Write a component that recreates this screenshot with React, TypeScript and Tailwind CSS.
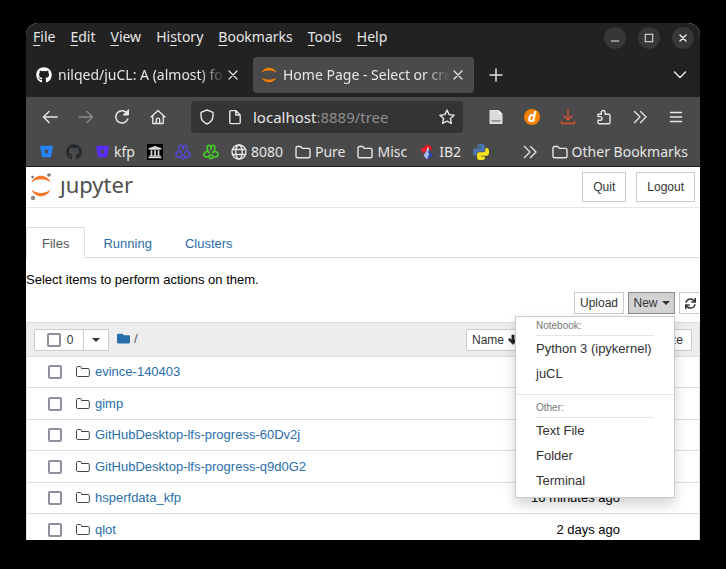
import type { ReactNode } from "react";
import { FaBitbucket, FaFolder, FaGithub, FaSync, FaUniversity } from "react-icons/fa";

const menus: [string, string, string][] = [
  ["", "F", "ile"],
  ["", "E", "dit"],
  ["", "V", "iew"],
  ["Hi", "s", "tory"],
  ["", "B", "ookmarks"],
  ["", "T", "ools"],
  ["", "H", "elp"],
];

const files = [
  { name: "evince-140403", modified: "" },
  { name: "gimp", modified: "" },
  { name: "GitHubDesktop-lfs-progress-60Dv2j", modified: "" },
  { name: "GitHubDesktop-lfs-progress-q9d0G2", modified: "" },
  { name: "hsperfdata_kfp", modified: "16 minutes ago" },
  { name: "qlot", modified: "2 days ago" },
];

function Line({ children, size = 16, width = 1.4, className = "" }: { children: ReactNode; size?: number; width?: number; className?: string }) {
  return (
    <svg
      width={size}
      height={size}
      viewBox="0 0 16 16"
      fill="none"
      stroke="currentColor"
      strokeWidth={width}
      strokeLinecap="round"
      strokeLinejoin="round"
      className={`shrink-0 ${className}`}
      aria-hidden="true"
    >
      {children}
    </svg>
  );
}

const CloseIcon = () => (
  <Line width={1.2}>
    <path d="M4 4l8 8M12 4l-8 8" />
  </Line>
);

const BookmarkFolder = () => (
  <Line>
    <path d="M1 4a1.5 1.5 0 0 1 1.5-1.5h3.2L7.6 4.4h5.9A1.5 1.5 0 0 1 15 5.9v6.3a1.5 1.5 0 0 1-1.5 1.5h-11A1.5 1.5 0 0 1 1 12.2z" />
  </Line>
);

const ListFolder = () => (
  <svg width="14" height="12" viewBox="0 0 14 12" fill="none" stroke="#444" strokeWidth="1" className="shrink-0" aria-hidden="true">
    <path d="M.5 1.7A1.2 1.2 0 0 1 1.700.5h2.600A1.200 1.200 0 0 1 5.500 1.700v.8h6.600A1.200 1.200 0 0 1 13.300 3.700v5.600A1.200 1.200 0 0 1 12.100 10.500H1.700A1.200 1.200 0 0 1 .5 9.300z" />
  </svg>
);

const ArrowDown = () => (
  <svg width="10" height="12" viewBox="0 0 10 12" className="-mr-1 shrink-0" aria-hidden="true">
    <path d="M3.900 1v5.300L1.800 4.200.3 5.700 5 10.500l4.700-4.800-1.500-1.500-2.100 2.100V1z" fill="#222" stroke="#222" strokeWidth=".6" />
  </svg>
);

const Clover = ({ color }: { color: string }) => (
  <svg width="16" height="16" viewBox="0 0 16 16" fill="none" stroke={color} strokeWidth="1.700" strokeLinejoin="round" strokeLinecap="round" className="shrink-0" aria-hidden="true">
    <path d="M8 5.500V3.500C7.500.5 3.800.8 4.200 3.800l.6 3.500C1.800 7.500.2 9.500 1.300 11.800c1.200 2 3.600 1.700 5 .2C5.500 15.500 10.500 15.500 9.700 12c1.400 1.500 3.800 1.800 5-.2 1.100-2.300-.5-4.300-3.500-4.500l.6-3.500C12.200.8 8.500.5 8 3.500" />
    <path d="M4.800 7.300l1.500 1.200M11.200 7.300L9.700 8.500M6.300 12l.9-1M9.700 12l-.9-1" />
  </svg>
);

const Python = () => (
  <svg width="16" height="16" viewBox="0 0 24 24" className="shrink-0" aria-hidden="true">
    <path
      fill="#4b74b0"
      d="M14.25.18l.9.2.73.26.59.3.45.32.34.34.25.34.16.33.1.3.04.26.02.2-.01.13V8.5l-.05.63-.13.55-.21.46-.26.38-.3.31-.33.25-.35.19-.35.14-.33.1-.3.07-.26.04-.21.02H8.77l-.69.05-.59.14-.5.22-.41.27-.33.32-.27.35-.2.36-.15.37-.1.35-.07.32-.04.27-.02.21v3.06H3.17l-.21-.03-.28-.07-.32-.12-.35-.18-.36-.26-.36-.36-.35-.46-.32-.59-.28-.73-.21-.88-.14-1.05-.05-1.23.06-1.22.16-1.04.24-.87.32-.71.36-.57.4-.44.42-.33.42-.24.4-.16.36-.1.32-.05.24-.01h.16l.06.01h8.16v-.83H6.18l-.01-2.75-.02-.37.05-.34.11-.31.17-.28.25-.26.31-.23.38-.2.44-.18.51-.15.58-.12.64-.1.71-.06.77-.04.84-.02 1.27.05zm-6.3 1.98l-.23.33-.08.41.08.41.23.34.33.22.41.09.41-.09.33-.22.23-.34.08-.41-.08-.41-.23-.33-.33-.22-.41-.09-.41.09z"
    />
    <path
      fill="#f5e01c"
      d="M21.04 6.11l.28.06.32.12.35.18.36.27.36.35.35.47.32.59.28.73.21.88.14 1.04.05 1.23-.06 1.23-.16 1.04-.24.86-.32.71-.36.57-.4.45-.42.33-.42.24-.4.16-.36.09-.32.05-.24.02-.16-.01h-8.22v.82h5.84l.01 2.76.02.36-.05.34-.11.31-.17.29-.25.25-.31.24-.38.2-.44.17-.51.15-.58.13-.64.09-.71.07-.77.04-.84.01-1.27-.04-1.07-.14-.9-.2-.73-.25-.59-.3-.45-.33-.34-.34-.25-.34-.16-.33-.1-.3-.04-.25-.02-.2.01-.13v-5.34l.05-.64.13-.54.21-.46.26-.38.3-.32.33-.24.35-.2.35-.14.33-.1.3-.06.26-.04.21-.02.13-.01h5.84l.69-.05.59-.14.5-.21.41-.28.33-.32.27-.35.2-.36.15-.36.1-.35.07-.32.04-.28.02-.21V6.07h2.09l.14.01z"
    />
  </svg>
);

function Caret() {
  return <span className="inline-block border-x-4 border-t-4 border-x-transparent border-t-current" />;
}

function Check({ label }: { label: string }) {
  return (
    <input
      type="checkbox"
      aria-label={label}
      className="size-3.5 shrink-0 appearance-none rounded-xs border-2 border-[#8f8f9d] bg-white checked:bg-[#8f8f9d]"
    />
  );
}

function NavButton({ label, children }: { label: string; children: ReactNode }) {
  return (
    <button type="button" aria-label={label} className="flex w-9 shrink-0 items-center justify-center">
      {children}
    </button>
  );
}

function Bookmark({ label, text, children }: { label: string; text?: string; children: ReactNode }) {
  return (
    <a href="#" aria-label={label} className="flex shrink-0 items-center gap-1 whitespace-nowrap">
      <span className="flex size-4 items-center justify-center">{children}</span>
      {text && <span>{text}</span>}
    </a>
  );
}

function BrowserTab({ icon, title, active = false }: { icon: ReactNode; title: string; active?: boolean }) {
  return (
    <div className={`flex h-9 w-[221px] items-center rounded-sm pr-2 pl-2 ${active ? "bg-[#4a4a4a]" : ""}`}>
      {icon}
      <button
        type="button"
        className="ml-1.5 min-w-0 flex-1 overflow-hidden text-left whitespace-nowrap [mask-image:linear-gradient(to_right,black_85%,transparent)]"
      >
        {title}
      </button>
      <button type="button" aria-label="Close tab">
        <CloseIcon />
      </button>
    </div>
  );
}

function WindowButton({ label, children }: { label: string; children: ReactNode }) {
  return (
    <button type="button" aria-label={label} className="flex size-[22px] items-center justify-center rounded-full bg-[#373737]">
      {children}
    </button>
  );
}

function BrowserChrome() {
  return (
    <header className="shrink-0 bg-[#222] font-['Noto_Sans',sans-serif] text-sm leading-5 text-[#e6e6e6]">
      <div className="flex h-[30px] items-center pr-1.5 pl-[7px]">
        <nav className="flex flex-1 gap-[15px] pb-0.5">
          {menus.map(([before, key, after]) => (
            <button type="button" key={before + key + after}>
              {before}
              <span className="underline underline-offset-3">{key}</span>
              {after}
            </button>
          ))}
        </nav>
        <div className="flex gap-3">
          <WindowButton label="Minimize">
            <Line size={12}>
              <path d="M3 12h10" />
            </Line>
          </WindowButton>
          <WindowButton label="Maximize">
            <Line size={12}>
              <path d="M3 3h10v10H3z" />
            </Line>
          </WindowButton>
          <WindowButton label="Close">
            <Line size={12} width={2}>
              <path d="M4 4l8 8M12 4l-8 8" />
            </Line>
          </WindowButton>
        </div>
      </div>

      <div className="flex h-11 items-center pr-3 pl-0.5">
        <BrowserTab icon={<FaGithub size={16} className="shrink-0 text-white" />} title="nilqed/juCL: A (almost) fo" />
        <div className="ml-1">
          <BrowserTab
            active
            title="Home Page - Select or cre"
            icon={
              <svg width="16" height="16" viewBox="0 0 16 16" fill="#f57c00" className="shrink-0" aria-hidden="true">
                <path d="M.5 5.500C3-.8 13-.8 15.500 5.500 12 2.800 4 2.800.5 5.500zM.5 10.500C4 13.200 12 13.200 15.500 10.500 13 16.800 3 16.800.5 10.500z" />
              </svg>
            }
          />
        </div>
        <button type="button" aria-label="New tab" className="ml-3.5">
          <Line width={1.5}>
            <path d="M8 2v12M2 8h12" />
          </Line>
        </button>
        <button type="button" aria-label="List all tabs" className="ml-auto">
          <Line width={1.5}>
            <path d="M2.500 5L8 10.500 13.500 5" />
          </Line>
        </button>
      </div>

      <div className="flex h-10 items-center bg-[#4a4a4a] px-1.5">
        <NavButton label="Back">
          <Line width={1.5}>
            <path d="M15 8H1.500M7 2.500L1.500 8 7 13.500" />
          </Line>
        </NavButton>
        <NavButton label="Forward">
          <Line width={1.5} className="text-[#8a8a8a]">
            <path d="M1 8h13.500M9 2.500L14.500 8 9 13.500" />
          </Line>
        </NavButton>
        <NavButton label="Reload">
          <Line width={1.5}>
            <path d="M13.800 10A6.200 6.200 0 1 1 13 4.200" />
            <path d="M14.500 1v5h-5z" fill="currentColor" strokeWidth="1" />
          </Line>
        </NavButton>
        <NavButton label="Home">
          <Line>
            <path d="M1 8l7-6.500L15 8M2.800 6.800v7.700h10.400V6.800M6.300 14.500v-3.700a1.700 1.700 0 0 1 3.400 0v3.700" />
          </Line>
        </NavButton>
        <div className="ml-[15px] flex h-8 min-w-0 flex-1 items-center rounded-sm bg-[#343434] px-2">
          <Line>
            <path d="M8 1l6 2.400v3.400c0 3.600-2.500 6.800-6 8.200-3.500-1.400-6-4.600-6-8.200V3.400z" />
          </Line>
          <Line className="ml-3">
            <path d="M2.800 2.600A1 1 0 0 1 3.800 1.600h5l4.400 4.400v7.600a1 1 0 0 1-1 1H3.800a1 1 0 0 1-1-1zM8.800 1.600V6h4.400" />
          </Line>
          <button type="button" className="ml-2.5 flex-1 text-left text-[15px] text-[#e6e6e6]">
            localhost<span className="text-[#8f8f8f]">:8889/tree</span>
          </button>
          <button type="button" aria-label="Bookmark this page">
            <Line>
              <path d="M8 1l2.100 4.600 5 .6-3.700 3.400 1 4.900L8 12.100l-4.400 2.400 1-4.900L.9 6.200l5-.6z" />
            </Line>
          </button>
        </div>
        <div className="ml-[15px] flex">
          <NavButton label="Reader">
            <svg width="16" height="16" viewBox="0 0 16 16" aria-hidden="true">
              <path d="M1.500 1h9l4 4v10h-13z" fill="#dcdcdc" />
              <path d="M10.500 1v4h4z" fill="#f8f8f8" />
              <path d="M3.500 11h9v2h-9z" fill="#9a9a9a" />
            </svg>
          </NavButton>
          <NavButton label="Document extension">
            <span className="flex size-4 items-center justify-center rounded-full bg-[#f58300] text-sm leading-4 font-bold text-white italic">
              d
            </span>
          </NavButton>
          <NavButton label="Downloads">
            <Line className="text-[#d9532c]">
              <path d="M8 1v10M4 7l4 4 4-4M1.500 12.500v2h13v-2" />
            </Line>
          </NavButton>
          <NavButton label="Extensions">
            <Line>
              <path d="M2 5.200h3.300V3.400a1.900 1.900 0 0 1 3.800 0v1.800h3.700a1.200 1.200 0 0 1 1.200 1.200v7.100a1.200 1.200 0 0 1-1.200 1.200H3.200A1.200 1.200 0 0 1 2 13.500v-2.300h2.200a1.800 1.800 0 0 0 0-3.600H2z" />
            </Line>
          </NavButton>
          <NavButton label="More tools">
            <Line>
              <path d="M2.500 2.500L8 8l-5.500 5.500M8.500 2.500L14 8l-5.500 5.500" />
            </Line>
          </NavButton>
          <NavButton label="Open application menu">
            <Line width={1.5}>
              <path d="M2.500 3.500h11M2.500 8h11M2.500 12.500h11" />
            </Line>
          </NavButton>
        </div>
      </div>

      <div className="flex h-[30px] items-center border-b border-[#1c1c1c] bg-[#4a4a4a] pr-3 pl-3">
        <div className="flex flex-1 items-center gap-3">
          <Bookmark label="Bitbucket">
            <FaBitbucket size={13} color="#2684ff" />
          </Bookmark>
          <Bookmark label="GitHub">
            <FaGithub size={16} color="#24292e" />
          </Bookmark>
          <Bookmark label="kfp" text="kfp">
            <FaBitbucket size={13} color="#5a2dff" />
          </Bookmark>
          <Bookmark label="Archive">
            <span className="flex size-4 items-center justify-center bg-black text-[#d8d8d8]">
              <FaUniversity size={14} />
            </span>
          </Bookmark>
          <Bookmark label="Clover">
            <Clover color="#5448cf" />
          </Bookmark>
          <Bookmark label="Clover green">
            <Clover color="#41cb25" />
          </Bookmark>
          <Bookmark label="8080" text="8080">
            <Line>
              <circle cx="8" cy="8" r="7" />
              <ellipse cx="8" cy="8" rx="3.200" ry="7" />
              <path d="M1.500 5.500h13M1.500 10.500h13" />
            </Line>
          </Bookmark>
          <Bookmark label="Pure" text="Pure">
            <BookmarkFolder />
          </Bookmark>
          <Bookmark label="Misc" text="Misc">
            <BookmarkFolder />
          </Bookmark>
          <Bookmark label="IB2" text="IB2">
            <svg width="16" height="16" viewBox="0 0 16 16" aria-hidden="true">
              <path d="M5.500 2.500C8-.5 13.500 1.500 13 6.500L9 4 6 8z" fill="#e8141c" />
              <path d="M1.500 5.500L5 3l2.500 4L5 9.500z" fill="#ee2030" />
              <path d="M9 2.500L7 8l3.500 1z" fill="#fff" />
              <path d="M8.500 5.500l5.500 6-6 4-3.500-4z" fill="#2747b8" />
              <path d="M8.500 5.500l1.500 5-2 5-3.500-4z" fill="#a9bdf0" />
            </svg>
          </Bookmark>
          <Bookmark label="Python">
            <Python />
          </Bookmark>
        </div>
        <button type="button" aria-label="Show more bookmarks" className="mr-3.5">
          <Line>
            <path d="M2.500 2.500L8 8l-5.500 5.500M8.500 2.500L14 8l-5.500 5.500" />
          </Line>
        </button>
        <Bookmark label="Other Bookmarks" text="Other Bookmarks">
          <BookmarkFolder />
        </Bookmark>
      </div>
    </header>
  );
}

function JupyterLogo() {
  return (
    <a href="#" aria-label="jupyter" className="flex items-center gap-2">
      <svg width="22" height="30" viewBox="0 0 22 30" className="shrink-0" aria-hidden="true">
        <path d="M1.500 10.500C4.500 1.500 17.500 1.500 20.500 10.500 16 6 6 6 1.500 10.500zM1.500 17.500C6 22 16 22 20.500 17.500 17.500 26.500 4.500 26.500 1.500 17.500z" fill="#f37726" />
        <circle cx="19" cy="3" r="1.800" fill="#767677" />
        <circle cx="2.500" cy="5" r="1.200" fill="#616262" />
        <circle cx="3" cy="26" r="2.200" fill="#8a8a8b" />
      </svg>
      <span className="pb-1.5 font-['Noto_Sans',sans-serif] text-[22px] leading-7 text-[#4e4e4e]">
        <span className="inline-block [clip-path:inset(10px_-4px_-4px_-4px)]">j</span>upyter
      </span>
    </a>
  );
}

const button = "flex items-center justify-center border border-[#ccc] bg-white text-xs text-[#333]";

function MenuGroup({ title, items }: { title: string; items: string[] }) {
  return (
    <div>
      <div className="mx-5 border-b border-[#e5e5e5] text-[10px] leading-[18px] text-[#777]">{title}</div>
      {items.map((item) => (
        <button type="button" role="menuitem" key={item} className="block w-full px-5 text-left text-[13px] leading-[25px] text-[#333]">
          {item}
        </button>
      ))}
    </div>
  );
}

function NewMenu() {
  return (
    <div className="relative">
      <button type="button" aria-expanded="true" className="flex h-[22px] w-[47px] items-center justify-center gap-1 border border-[#8c8c8c] bg-[#d4d4d4] text-xs text-[#333] shadow-inner">
        New <Caret />
      </button>
      <div role="menu" className="absolute top-6 right-0 z-10 w-40 border border-[#ccc] bg-white pb-1 shadow-[0_6px_12px_rgba(0,0,0,0.18)]">
        <MenuGroup title="Notebook:" items={["Python 3 (ipykernel)", "juCL"]} />
        <div className="mt-2 mb-1 border-b border-[#e5e5e5]" />
        <MenuGroup title="Other:" items={["Text File", "Folder", "Terminal"]} />
      </div>
    </div>
  );
}

function FileList() {
  return (
    <section className="mt-2 border border-[#ddd]">
      <div className="flex h-[33px] items-center bg-[#eee] px-[7px] text-xs">
        <div className="flex">
          <label className={`${button} h-[22px] w-[50px] gap-1.5 pl-0.5`}>
            <Check label="Select all" />0
          </label>
          <button type="button" aria-label="Select by type" className={`${button} -ml-px h-[22px] w-[26px]`}>
            <Caret />
          </button>
        </div>
        <a href="#" aria-label="Root folder" className="ml-2 pb-0.5 text-[#296eaa]">
          <FaFolder size={13} />
        </a>
        <span className="ml-1 pb-0.5 text-[13px] text-[#555]">/</span>
        <div className="ml-auto flex gap-1">
          <button type="button" className={`${button} h-[22px] gap-1 px-[5px]`}>
            Name <ArrowDown />
          </button>
          <button type="button" className={`${button} h-[22px] w-[102px]`}>Last Modified</button>
          <button type="button" className={`${button} h-[22px] px-2`}>File size</button>
        </div>
      </div>
      <table className="w-full border-collapse">
        <tbody>
          {files.map((file) => (
            <tr key={file.name} className="h-8 border-t border-[#ddd] odd:h-[31px]">
              <td className="w-[49px] p-0 pl-[21px]">
                <span className="flex">
                  <Check label={file.name} />
                </span>
              </td>
              <td className="p-0">
                <a href="#" className="flex items-center gap-[5px] text-[#296eaa]">
                  <ListFolder />
                  {file.name}
                </a>
              </td>
              <td className="p-0 pr-[79px] text-right">{file.modified}</td>
            </tr>
          ))}
        </tbody>
      </table>
    </section>
  );
}

export default function App() {
  return (
    <div className="h-screen bg-black px-[26px] pt-[23px] pb-[29px]">
      <div className="flex h-full flex-col overflow-hidden rounded-t-xl bg-white">
        <BrowserChrome />
        <main className="min-h-0 flex-1 overflow-hidden font-['Liberation_Sans',Arial,sans-serif] text-[13px] leading-[18px] text-black">
          <div className="flex h-[41px] items-center border-b border-[#e7e7e7] pr-[5px] pl-1">
            <JupyterLogo />
            <div className="ml-auto flex gap-2.5">
              <button type="button" className={`${button} h-[30px] px-2.5`}>Quit</button>
              <button type="button" className={`${button} h-[30px] px-2.5`}>Logout</button>
            </div>
          </div>

          <nav className="mt-[19px] flex gap-[3px] border-b border-[#ddd] text-[#296eaa]">
            <a href="#" aria-current="page" className="-mb-px h-[31px] rounded-t-xs border border-[#ddd] border-b-white bg-white px-[15px] pt-[7px] text-[#555]">
              Files
            </a>
            <a href="#" className="px-[15px] pt-2">Running</a>
            <a href="#" className="px-[15px] pt-2">Clusters</a>
          </nav>

          <p className="mt-[13px]">Select items to perform actions on them.</p>

          <div className="mt-[3px] flex justify-end gap-1">
            <button type="button" className={`${button} h-[22px] px-[5px]`}>Upload</button>
            <NewMenu />
            <button type="button" aria-label="Refresh" className="flex h-[22px] w-[21px] items-center justify-center border border-r-0 border-[#ccc] bg-white text-[#333]">
              <FaSync size={11} />
            </button>
          </div>

          <FileList />
        </main>
      </div>
    </div>
  );
}
